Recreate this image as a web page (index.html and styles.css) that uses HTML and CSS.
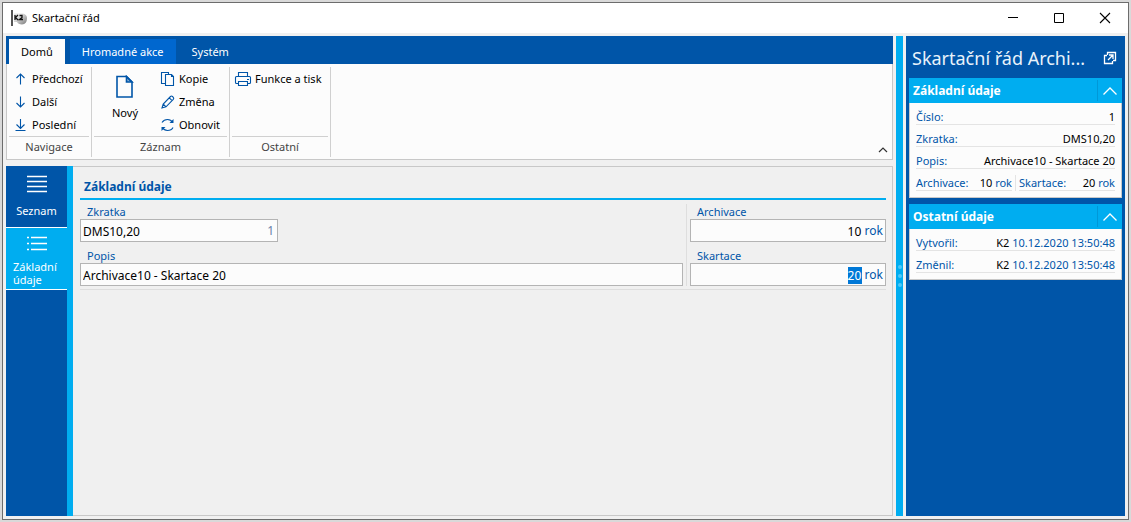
FILE: index.html
```html
<!DOCTYPE html>
<html lang="cs">
<head>
<meta charset="utf-8">
<title>Skartační řád</title>
<link rel="stylesheet" href="styles.css">
</head>
<body>
<div class="window">
  <header class="titlebar">
    <svg class="app-icon" width="18" height="16" viewBox="0 0 18 16">
      <defs><linearGradient id="ball" x1="0" y1="0" x2="1" y2="1"><stop offset="0.3" stop-color="#e4e4e4"/><stop offset="1" stop-color="#777"/></linearGradient></defs>
      <path d="M3 3.500h9q4 1 4 4.500 0 6-5 6.500Q7 14 6 12H3z" fill="url(#ball)"/>
      <path d="M0 0h2v16H0z" fill="#555"/>
      <path d="M4 5v5M7 5L4.500 7.500L7 10M8.500 5.500h2.500v2l-2.500 2h3.500" fill="none" stroke="#111" stroke-width="1.300"/>
    </svg>
    <h1 class="window-title">Skartační řád</h1>
    <div class="window-buttons">
      <button class="window-button" aria-label="Minimalizovat"><svg width="12" height="12"><path d="M1 5.500h10" stroke="#000"/></svg></button>
      <button class="window-button" aria-label="Maximalizovat"><svg width="12" height="12"><path d="M1.500 1.500h9v9h-9z" fill="none" stroke="#000"/></svg></button>
      <button class="window-button" aria-label="Zavřít"><svg width="12" height="12"><path d="M1 1l10 10M11 1L1 11" stroke="#000" stroke-width="1.100"/></svg></button>
    </div>
  </header>

  <div class="workspace">
    <div class="main">
      <nav class="tabs">
        <button class="tab tab-active">Domů</button>
        <button class="tab tab-hot">Hromadné akce</button>
        <button class="tab">Systém</button>
      </nav>
      <div class="ribbon">
        <section class="group group-nav">
          <div class="group-body">
            <div class="commands">
              <button class="command"><svg width="16" height="16" class="icon"><path d="M8.500 13.500V3M4.500 7l4-4 4 4"/></svg>Předchozí</button>
              <button class="command"><svg width="16" height="16" class="icon"><path d="M8.500 2.500V13M4.500 9l4 4 4-4"/></svg>Další</button>
              <button class="command"><svg width="16" height="16" class="icon"><path d="M8.500 2v9.500M4.500 7.500l4 4 4-4M3.500 13.500h10"/></svg>Poslední</button>
            </div>
          </div>
          <h2 class="group-label">Navigace</h2>
        </section>
        <section class="group group-record">
          <div class="group-body">
            <button class="command-big"><svg width="18" height="24" class="icon icon-strong"><path d="M1 1.500h9.500l5.500 5.500V22H1z"/><path d="M10.500 1.500v5.500h5.500z" fill="#0055a8" fill-opacity="0.500"/></svg>Nový</button>
            <div class="commands">
              <button class="command"><svg width="16" height="16" class="icon"><path d="M5 12.500H1.500v-11H8.500V3.500M5.500 3.500h6l2 2v9h-8z"/><path d="M11.500 3.500v2h2"/></svg>Kopie</button>
              <button class="command"><svg width="16" height="16" class="icon"><path d="M2 14l1.200-4L10.500 2.500q1-.9 2 0l.8.8q.9 1 0 2L6 12.800zM9.300 3.800l2.800 2.800M3.200 10L6 12.800"/></svg>Změna</button>
              <button class="command"><svg width="16" height="16" class="icon"><path d="M2 5.500Q4 2.500 7.500 2.500q3.500 0 5 3M13 10.500q-1.500 3-5.500 3-3.500 0-5-3"/><path d="M13.500 2v4h-4zM1.500 14v-4h4z" fill="#0055a8" stroke="none"/></svg>Obnovit</button>
            </div>
          </div>
          <h2 class="group-label">Záznam</h2>
        </section>
        <section class="group group-other">
          <div class="group-body">
            <div class="commands">
              <button class="command"><svg width="18" height="16" class="icon"><path d="M4.500 5.500v-4h9v4M4 12.500H2.500Q1.500 12.500 1.500 11.500v-5q0-1 1-1h13q1 0 1 1v5q0 1-1 1H14M4.500 10.500h9v4h-9zM13 8.500h2"/></svg>Funkce a tisk</button>
            </div>
          </div>
          <h2 class="group-label">Ostatní</h2>
        </section>
        <button class="collapse" aria-label="Sbalit pás karet"><svg width="12" height="8"><path d="M2 6l4-4 4 4" fill="none" stroke="#333" stroke-width="1.200"/></svg></button>
      </div>

      <div class="content">
        <nav class="side-tabs">
          <button class="side-tab"><svg width="20" height="20"><path d="M0 2.500h20M0 7.500h20M0 12.500h20M0 17.500h20" stroke="#fff" stroke-width="1.400"/></svg><span>Seznam</span></button>
          <button class="side-tab side-tab-active"><svg width="20" height="18"><path d="M0 2.500h2M4 2.500h16M0 8.500h2M4 8.500h16M0 14.500h2M4 14.500h16" stroke="#fff" stroke-width="1.400"/></svg><span>Základní údaje</span></button>
        </nav>
        <main class="panel">
          <h2 class="panel-title">Základní údaje</h2>
          <form class="form">
            <div class="column column-wide">
              <div class="field">
                <label for="code">Zkratka</label>
                <div class="box box-short"><input id="code" class="input" value="DMS10,20"><span class="number">1</span></div>
              </div>
              <div class="field">
                <label for="description">Popis</label>
                <div class="box"><input id="description" class="input" value="Archivace10 - Skartace 20"></div>
              </div>
            </div>
            <div class="column column-side">
              <div class="field">
                <label for="archive">Archivace</label>
                <div class="box box-right"><input id="archive" class="input input-years" value="10"><span class="unit">rok</span></div>
              </div>
              <div class="field">
                <label for="shred">Skartace</label>
                <div class="box box-right"><input id="shred" class="input input-years input-selected" value="20"><span class="unit">rok</span></div>
              </div>
            </div>
          </form>
        </main>
      </div>
    </div>

    <div class="splitter"><i class="dot"></i><i class="dot"></i><i class="dot"></i></div>

    <aside class="preview">
      <div class="preview-head">
        <h2 class="preview-title">Skartační řád Archi...</h2>
        <button class="open" aria-label="Otevřít v novém okně"><svg width="14" height="14"><path d="M4 4.500H1.500v8h8V10M4.500 4V1.500h8v8H10M5 9l5-5M6 4h4v4" fill="none" stroke="#fff" stroke-width="1.300"/></svg></button>
      </div>
      <section class="card">
        <div class="card-head"><h3>Základní údaje</h3><button class="card-toggle" aria-label="Sbalit"><svg width="16" height="10"><path d="M1.500 8.500l6.500-6.500 6.500 6.500" fill="none" stroke="#fff" stroke-width="1.300"/></svg></button></div>
        <dl class="card-body">
          <div class="row"><dt>Číslo:</dt><dd>1</dd></div>
          <div class="row"><dt>Zkratka:</dt><dd>DMS10,20</dd></div>
          <div class="row"><dt>Popis:</dt><dd>Archivace10 - Skartace 20</dd></div>
          <div class="pair">
            <div class="row"><dt>Archivace:</dt><dd>10 <span class="unit">rok</span></dd></div>
            <div class="divider"></div>
            <div class="row"><dt>Skartace:</dt><dd>20 <span class="unit">rok</span></dd></div>
          </div>
        </dl>
      </section>
      <section class="card">
        <div class="card-head"><h3>Ostatní údaje</h3><button class="card-toggle" aria-label="Sbalit"><svg width="16" height="10"><path d="M1.500 8.500l6.500-6.500 6.500 6.500" fill="none" stroke="#fff" stroke-width="1.300"/></svg></button></div>
        <dl class="card-body">
          <div class="row"><dt>Vytvořil:</dt><dd>K2 <span class="unit">10.12.2020 13:50:48</span></dd></div>
          <div class="row"><dt>Změnil:</dt><dd>K2 <span class="unit">10.12.2020 13:50:48</span></dd></div>
        </dl>
      </section>
    </aside>
  </div>
</div>
</body>
</html>
```
FILE: styles.css
```css
:root {
  --blue: #0055a8;
  --cyan: #00adf0;
  --gray: #f0f0f0;
  --line: #c8c8c8;
}

* { box-sizing: border-box; }

body {
  margin: 0;
  padding: 2px;
  height: 100vh;
  display: flex;
  background: #d9d9d9;
  color: #000;
  font: 11px/16px "Noto Sans", "Open Sans", sans-serif;
}

h1, h2, h3, dl, dd { margin: 0; font-weight: 400; font-size: 11px; }

button {
  border: 0;
  padding: 0;
  background: none;
  color: inherit;
  font: inherit;
}

svg { display: block; flex: none; }

.window {
  flex: 1;
  min-width: 0;
  display: flex;
  flex-direction: column;
  border: 1px solid #6c6c6c;
  background: var(--gray);
}

.titlebar {
  display: flex;
  align-items: center;
  height: 30px;
  padding-left: 8px;
  background: #fff;
}
.window-title { flex: 1; margin-left: 3px; }
.window-buttons { display: flex; }
.window-button { width: 46px; height: 30px; display: grid; place-items: center; }

.workspace { flex: 1; display: flex; gap: 3px; padding: 3px; min-height: 0; }
.main { flex: 1; min-width: 0; display: flex; flex-direction: column; }

.tabs { display: flex; height: 28px; padding: 3px 3px 0; background: var(--blue); color: #fff; }
.tab { padding: 0 12px; }
.tab-active { margin-right: 5px; background: #fcfcfc; color: #000; }
.tab-hot { margin-right: 4px; background: #0067cf; }

.ribbon {
  display: flex;
  height: 96px;
  margin-bottom: 6px;
  padding: 3px 0 2px;
  border: solid var(--line);
  border-width: 0 1px 1px;
  background: #fcfcfc;
}
.group { display: flex; flex-direction: column; padding: 0 2px; border-right: 1px solid #d0d0d0; }
.group-nav { width: 85px; }
.group-record { width: 138px; }
.group-other { width: 101px; }
.group-body { display: flex; flex: 1; border-bottom: 1px solid #d0d0d0; }
.group-label { height: 20px; line-height: 20px; text-align: center; color: #444; }
.commands { display: flex; flex-direction: column; }
.command { display: flex; align-items: center; gap: 4px; height: 23px; white-space: nowrap; }
.group-nav .command { padding-left: 3px; }
.group-record .command { gap: 3px; }
.group-other .command { gap: 3px; padding-left: 2px; }
.command-big { display: flex; flex-direction: column; align-items: center; gap: 6px; width: 62px; padding: 8px 0 0; margin-right: 4px; }
.icon { fill: none; stroke: var(--blue); stroke-width: 1.1; }
.icon-strong { stroke-width: 1.6; }
.collapse { margin-left: auto; align-self: flex-end; padding: 1px 3px 3px; }

.content { flex: 1; display: flex; min-height: 0; }
.side-tabs { width: 67px; background: var(--blue); border-right: 6px solid var(--cyan); color: #fff; }
.side-tab {
  display: flex;
  flex-direction: column;
  align-items: center;
  gap: 7px;
  width: 100%;
  height: 62px;
  padding-top: 8px;
  border-bottom: 1px solid #fff;
  line-height: 13px;
}
.side-tab span { line-height: 20px; }
.side-tab-active { background: var(--cyan); padding-top: 7px; }
.side-tab-active span { width: 47px; line-height: 13px; text-align: left; }

.panel { flex: 1; min-width: 0; padding: 8px 6px 0 7px; border: solid var(--line); border-width: 1px 1px 1px 0; }
.panel-title {
  padding: 0 4px;
  height: 25px;
  line-height: 23px;
  border-bottom: 2px solid var(--cyan);
  color: var(--blue);
  font-size: 12px;
  font-weight: 700;
}
.form { display: flex; gap: 3px; padding: 4px 0 3px; border-bottom: 1px solid #dedede; }
.column { display: flex; flex-direction: column; gap: 6px; }
.column-wide { flex: 1; }
.column-side { width: 200px; padding-left: 3px; border-left: 1px solid #dedede; }
.field label { display: block; padding-left: 7px; line-height: 15px; color: var(--blue); }
.box {
  display: flex;
  align-items: center;
  height: 23px;
  padding: 1px 2px 0;
  border: 1px solid #b4b4b4;
  background: #fcfcfc;
  font-size: 12px;
}
.box-short { width: 198px; padding-right: 3px; }
.box-right { justify-content: flex-end; gap: 3px; }
.input { flex: 1; min-width: 0; height: 17px; padding: 0; border: 0; outline: 0; background: none; color: #000; font: inherit; }
.input-years { flex: none; width: 14px; }
.input-selected { background: #0078d7; color: #fff; }
.number { color: #6a7fa8; }
.unit { color: var(--blue); }

.splitter { width: 7px; display: flex; flex-direction: column; align-items: center; justify-content: center; gap: 5px; background: var(--cyan); }
.dot { width: 4px; height: 4px; border-radius: 50%; background: #4cc8f8; }

.preview { width: 219px; padding: 0 3px; background: var(--blue); }
.preview-head { display: flex; align-items: center; justify-content: space-between; height: 42px; padding: 2px 5px 0 3px; color: #fff; }
.preview-title { white-space: nowrap; font-size: 18px; line-height: 28px; color: #e8f2fb; }
.card { margin-bottom: 6px; }
.card-head { display: flex; align-items: center; height: 25px; padding-left: 4px; background: var(--cyan); color: #fff; }
.card-head h3 { flex: 1; font-size: 12px; font-weight: 700; }
.card-toggle { width: 25px; height: 21px; display: grid; place-items: center; border-left: 1px solid #0098d8; }
.card-body { padding: 0 6px 6px; border: solid var(--line); border-width: 0 1px 1px; background: #fcfcfc; }
.row { flex: 1; display: flex; justify-content: space-between; height: 22px; padding-top: 6px; border-bottom: 1px solid #e4e4e4; white-space: nowrap; }
.row dt { color: var(--blue); }
.pair { display: flex; gap: 3px; }
.divider { width: 1px; margin-top: 6px; background: #e4e4e4; }
```
